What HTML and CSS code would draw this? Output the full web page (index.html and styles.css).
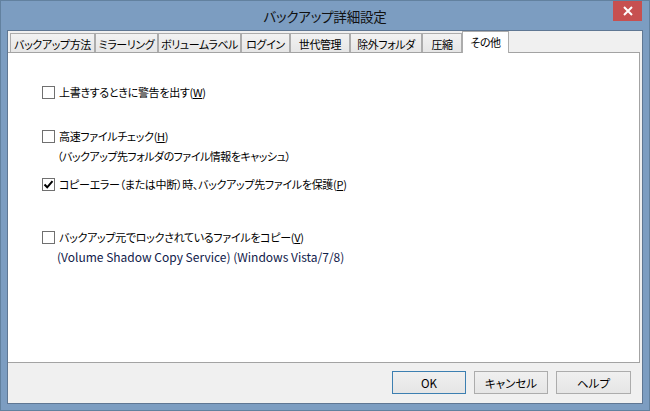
FILE: index.html
```html
<!DOCTYPE html>
<html lang="ja">
<head>
<meta charset="utf-8">
<title>バックアップ詳細設定</title>
<link rel="stylesheet" href="styles.css">
</head>
<body>
<div class="window">
  <div class="titlebar">
    <span class="tb-spacer"></span>
    <div class="title">バックアップ詳細設定</div>
    <button class="close" aria-label="閉じる">
      <svg width="10" height="10" viewBox="0 0 10 10"><path d="M1 1 L9 9 M9 1 L1 9" stroke="#fff" stroke-width="2" fill="none"/></svg>
    </button>
  </div>
  <div class="client">
    <div class="tabs">
      <div class="tab t1">バックアップ方法</div>
      <div class="tab t2">ミラーリング</div>
      <div class="tab t3">ボリュームラベル</div>
      <div class="tab t4">ログイン</div>
      <div class="tab t5">世代管理</div>
      <div class="tab t6">除外フォルダ</div>
      <div class="tab t7">圧縮</div>
      <div class="tab t8 active">その他</div>
    </div>
    <div class="panel">
      <div class="opt opt-1"><span class="cb"></span><span class="label">上書きするときに警告を出す(<u>W</u>)</span></div>
      <div class="opt opt-2"><span class="cb"></span><span class="label">高速ファイルチェック(<u>H</u>)</span></div>
      <div class="note">（バックアップ先フォルダのファイル情報をキャッシュ）</div>
      <div class="opt opt-3"><span class="cb checked"><svg width="11" height="11" viewBox="0 0 11 11"><path d="M1.5 5.5 L4.2 8.3 L9.5 2.2" stroke="#000" stroke-width="2" fill="none"/></svg></span><span class="label">コピーエラー（または中断）時、バックアップ先ファイルを保護(<u>P</u>)</span></div>
      <div class="opt opt-4"><span class="cb"></span><span class="label">バックアップ元でロックされているファイルをコピー(<u>V</u>)</span></div>
      <div class="note latin">(Volume Shadow Copy Service) (Windows Vista/7/8)</div>
    </div>
    <div class="buttons">
      <button class="btn default">OK</button>
      <button class="btn">キャンセル</button>
      <button class="btn help">ヘルプ</button>
    </div>
  </div>
</div>
</body>
</html>
```
FILE: styles.css
```css
* { box-sizing: border-box; }
html, body { margin: 0; padding: 0; }
body {
  width: 650px;
  height: 411px;
  overflow: hidden;
  font-family: "Noto Sans CJK JP", "Noto Sans", sans-serif;
  font-feature-settings: "palt";
  font-size: 11px;
  color: #000;
}
.window {
  width: 650px;
  height: 411px;
  background: #7c9dc1;
  border: 1px solid #62819f;
  padding: 0 6px 6px 6px;
  display: flex;
  flex-direction: column;
}
.titlebar {
  height: 29px;
  flex: none;
  display: grid;
  grid-template-columns: 1fr auto 1fr;
}
.title {
  font-size: 13.5px;
  line-height: 31px;
  color: #111;
  letter-spacing: -0.2px;
}
.close {
  justify-self: end;
  align-self: start;
  width: 29px;
  height: 20px;
  margin-right: 1px;
  border: none;
  padding: 0;
  background: #c75050;
  display: flex;
  align-items: center;
  justify-content: center;
}
.close svg { display: block; }
.client {
  flex: 1;
  background: #f0f0f0;
  border: 1px solid #5f7793;
  display: flex;
  flex-direction: column;
}
.tabs {
  height: 22px;
  flex: none;
  display: flex;
  align-items: flex-end;
  padding-left: 2px;
  margin-bottom: -1px;
  position: relative;
  z-index: 1;
}
.tab {
  height: 19px;
  margin-bottom: 1px;
  border: 1px solid #acacac;
  border-bottom: none;
  background: linear-gradient(#f2f2f2, #e6e6e6);
  display: flex;
  align-items: center;
  justify-content: center;
  font-size: 11px;
  letter-spacing: -0.4px;
  white-space: nowrap;
  padding-top: 1px;
}
.tab.active {
  height: 22px;
  margin-bottom: 0;
  background: #fff;
  padding-top: 0;
  padding-bottom: 2px;
}
.t1 { width: 85px; }
.t2 { width: 63px; }
.t3 { width: 83px; }
.t4 { width: 49px; }
.t5 { width: 60px; }
.t6 { width: 72px; }
.t7 { width: 40px; }
.t8 { width: 47px; }
.panel {
  height: 311px;
  flex: none;
  margin-right: 2px;
  background: #fff;
  border: 1px solid #a3a3a3;
  border-left: none;
  padding: 29px 0 0 34px;
}
.opt {
  display: flex;
  align-items: center;
  height: 20px;
}
.opt-2 { margin-top: 24px; }
.opt-3 { margin-top: 8px; }
.opt-4 { margin-top: 33px; }
.cb {
  width: 13px;
  height: 13px;
  border: 1px solid #707070;
  background: #fff;
  flex: none;
  margin-right: 4px;
  display: flex;
  align-items: center;
  justify-content: center;
}
.label { white-space: nowrap; letter-spacing: -0.3px; }
u { text-decoration: underline; text-underline-offset: 1px; }
.note {
  height: 20px;
  line-height: 20px;
  padding-left: 15px;
  white-space: nowrap;
  letter-spacing: -0.5px;
}
.note.latin {
  font-size: 12px;
  letter-spacing: 0;
  color: #10204a;
}
.buttons {
  margin-top: 8px;
  display: flex;
  justify-content: flex-end;
  gap: 8px;
  padding-right: 11px;
}
.btn {
  width: 74px;
  height: 23px;
  border: 1px solid #acacac;
  background: linear-gradient(#f0f0f0, #e5e5e5);
  font-family: inherit;
  font-feature-settings: "palt";
  font-size: 11.5px;
  color: #000;
  padding: 0;
}
.btn.default { border-color: #3c7fb1; }
.btn.help { width: 75px; }
```
